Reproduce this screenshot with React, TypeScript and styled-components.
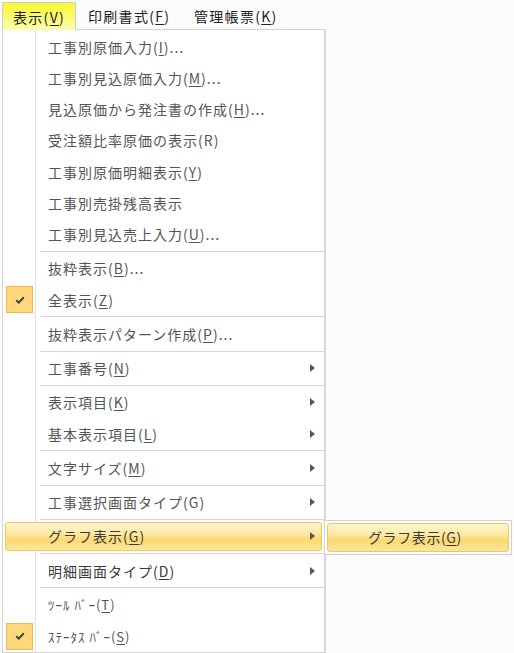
import * as React from 'react';
import styled, { createGlobalStyle, css } from 'styled-components';

const GlobalStyle = createGlobalStyle`
    html, body {
        margin: 0;
        padding: 0;
        background: #fcfcfc;
    }
    body {
        font-family: "Noto Sans CJK JP", "Noto Sans", sans-serif;
        font-size: 14px;
        color: #555;
    }
    u {
        text-underline-offset: 2px;
    }
`;

const Screen = styled.div`
    width: 514px;
    height: 653px;
    overflow: hidden;
`;

const MenuBar = styled.div`
    display: flex;
    align-items: flex-end;
    height: 29px;
    padding-left: 2px;
`;

const BarItem = styled.div<{ $active?: boolean; $width: number }>`
    width: ${(p) => p.$width}px;
    height: 27px;
    box-sizing: border-box;
    padding-left: 12px;
    display: flex;
    align-items: center;
    line-height: 1;
    letter-spacing: 1.3px;
    color: #222;
    white-space: nowrap;
    ${(p) => p.$active && css`
        position: relative;
        z-index: 1;
        height: 28px;
        margin-bottom: -1px;
        padding-left: 10px;
        border: 1px solid #cdcdcd;
        border-bottom: none;
        background: linear-gradient(#f8f832 0%, #fafa66 45%, #fdfdb4 100%);
    `}
`;

const Dropdown = styled.div`
    display: flex;
    flex-direction: column;
    margin-left: 2px;
    width: 324px;
    box-sizing: border-box;
    padding-top: 1px;
    border: 1px solid #d3d3d3;
    border-right: 2px solid #d6d6d6;
    background-color: #fff;
    background-image: linear-gradient(to right, transparent 32px, #e2e2e2 32px, #e2e2e2 33px, transparent 33px);
`;

const Row = styled.div<{ $active?: boolean }>`
    position: relative;
    display: flex;
    align-items: center;
    flex: none;
    height: 29.25px;
    box-sizing: border-box;
    margin: 1px 2px;
    border: 1px solid transparent;
    border-radius: 3px;
    ${(p) => p.$active && css`
        border-color: #f0c75e;
        background: linear-gradient(#fff5cf 0%, #fde8a3 40%, #fcd96f 62%, #fde6a0 100%);
    `}
`;

const Separator = styled.div`
    flex: none;
    height: 1px;
    margin: 1px 0 1px 37px;
    background: #d8d8d8;
`;

const IconCell = styled.div<{ $checked?: boolean }>`
    flex: none;
    width: 27px;
    height: 27px;
    box-sizing: border-box;
    display: flex;
    align-items: center;
    justify-content: center;
    ${(p) => p.$checked && css`
        background: #fed87c;
        border: 1px solid #f3b656;
    `}
`;

const Label = styled.div<{ $small?: boolean; $strong?: boolean }>`
    flex: 1;
    margin-left: 15px;
    white-space: nowrap;
    line-height: 1;
    letter-spacing: 1px;
    font-size: ${(p) => (p.$small ? 13 : 14)}px;
    color: ${(p) => (p.$strong ? '#3a3a3a' : '#555')};
`;

const Arrow = styled.span`
    flex: none;
    width: 0;
    height: 0;
    margin-right: 6px;
    border-left: 5px solid #555;
    border-top: 4px solid transparent;
    border-bottom: 4px solid transparent;
`;

const SubMenu = styled.div`
    position: absolute;
    left: calc(100% + 3px);
    top: -3px;
    width: 188px;
    box-sizing: border-box;
    padding: 2px;
    border: 1px solid #d0d0d0;
    background: #fff;
    z-index: 2;
`;

const SubItem = styled.div`
    height: 29.25px;
    box-sizing: border-box;
    display: flex;
    align-items: center;
    padding-left: 40px;
    border: 1px solid #f0c75e;
    border-radius: 3px;
    background: linear-gradient(#fff5cf 0%, #fde8a3 40%, #fcd96f 62%, #fde6a0 100%);
    color: #3a3a3a;
    line-height: 1;
    letter-spacing: 0.6px;
    white-space: nowrap;
`;

interface MenuEntry {
    sep?: boolean;
    text?: string;
    key?: string;
    plainKey?: boolean;
    suffix?: string;
    checked?: boolean;
    arrow?: boolean;
    active?: boolean;
    small?: boolean;
    strong?: boolean;
}

const entries: MenuEntry[] = [
    { text: '工事別原価入力', key: 'I', suffix: '...' },
    { text: '工事別見込原価入力', key: 'M', suffix: '...' },
    { text: '見込原価から発注書の作成', key: 'H', suffix: '...' },
    { text: '受注額比率原価の表示', key: 'R', plainKey: true },
    { text: '工事別原価明細表示', key: 'Y' },
    { text: '工事別売掛残高表示' },
    { text: '工事別見込売上入力', key: 'U', suffix: '...' },
    { sep: true },
    { text: '抜粋表示', key: 'B', suffix: '...' },
    { text: '全表示', key: 'Z', checked: true },
    { sep: true },
    { text: '抜粋表示パターン作成', key: 'P', suffix: '...' },
    { sep: true },
    { text: '工事番号', key: 'N', arrow: true },
    { sep: true },
    { text: '表示項目', key: 'K', arrow: true },
    { text: '基本表示項目', key: 'L', arrow: true },
    { sep: true },
    { text: '文字サイズ', key: 'M', arrow: true },
    { sep: true },
    { text: '工事選択画面タイプ', key: 'G', plainKey: true, arrow: true },
    { sep: true },
    { text: 'グラフ表示', key: 'G', arrow: true, active: true, strong: true },
    { sep: true },
    { text: '明細画面タイプ', key: 'D', arrow: true, strong: true },
    { sep: true },
    { text: 'ﾂｰﾙ ﾊﾞｰ', key: 'T', small: true },
    { text: 'ｽﾃｰﾀｽ ﾊﾞｰ', key: 'S', small: true, checked: true },
];

const Mnemonic: React.FC<{ k?: string; plain?: boolean }> = ({ k, plain }) => {
    if (!k) return null;
    return <>({plain ? k : <u>{k}</u>})</>;
};

const Check = () => (
    <svg width="10" height="8" viewBox="0 0 10 8">
        <path d="M1.2 4.2 L3.8 6.6 L8.8 1.2" fill="none" stroke="#3f3f3f" strokeWidth="2" />
    </svg>
);

const App: React.FC = () => {
    return (
        <Screen>
            <GlobalStyle />
            <MenuBar>
                <BarItem $active $width={74}>表示(<u>V</u>)</BarItem>
                <BarItem $width={106}>印刷書式(<u>F</u>)</BarItem>
                <BarItem $width={112}>管理帳票(<u>K</u>)</BarItem>
            </MenuBar>
            <Dropdown>
                {entries.map((e, i) =>
                    e.sep ? (
                        <Separator key={i} />
                    ) : (
                        <Row key={i} $active={e.active}>
                            <IconCell $checked={e.checked}>{e.checked && <Check />}</IconCell>
                            <Label $small={e.small} $strong={e.strong}>
                                {e.text}
                                <Mnemonic k={e.key} plain={e.plainKey} />
                                {e.suffix}
                            </Label>
                            {e.arrow && <Arrow />}
                            {e.active && (
                                <SubMenu>
                                    <SubItem>グラフ表示(<u>G</u>)</SubItem>
                                </SubMenu>
                            )}
                        </Row>
                    )
                )}
            </Dropdown>
        </Screen>
    );
};

export default App;
